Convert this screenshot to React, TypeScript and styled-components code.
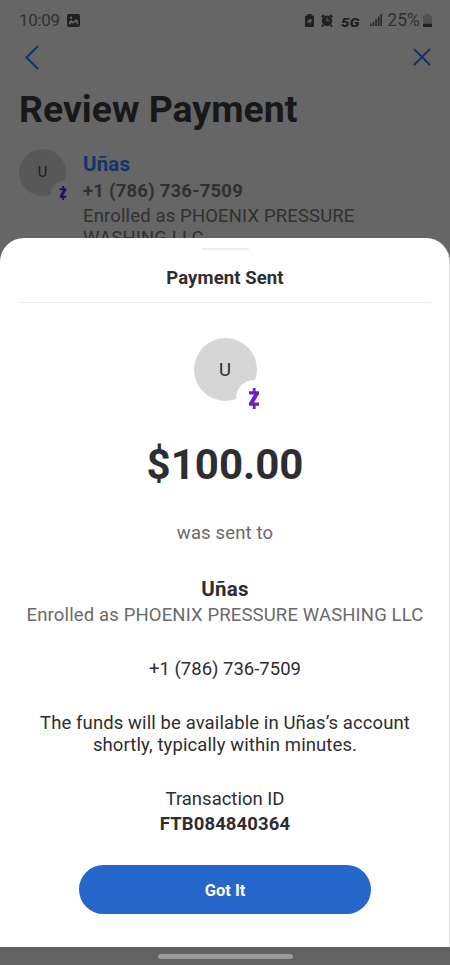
import React from 'react';
import styled, { createGlobalStyle } from 'styled-components';

const COLOR = {
    DIMMED: '#666666',
    DIMMED_TEXT: '#303030',
    DIMMED_BLUE: '#143468',
    WHITE: '#ffffff',
    TEXT: '#2e2e30',
    SUB_TEXT: '#6a6a6c',
    BUTTON: '#2466ca',
    ZELLE: '#6a1fc4',
    ZELLE_DIMMED: '#2c0b5e',
};

const ZelleMark = ({ color, width }: { color: string; width: number }): JSX.Element => (
    <svg width={width} height={width * 1.75} viewBox="0 0 12 21" fill="none" stroke={color}>
        <path d="M1 4.8h10M1 16.200h10" strokeWidth="3.2" />
        <path d="M9.200 4.900L2.800 16.100" strokeWidth="4" />
        <path d="M6.200 0v4M6.200 17v4" strokeWidth="2.800" />
    </svg>
);

const StatusBar = (): JSX.Element => (
    <StatusRow>
        <StatusText size={17} spacing={-0.3}>
            10:09
        </StatusText>
        <PhotoIcon width="13" height="13" viewBox="0 0 13 13">
            <rect width="13" height="13" rx="2" fill="#202020" />
            <path d="M2 10.500V8l2.200-2 2 1.800L9 4.700l2.200 2.500v3.300z" fill={COLOR.DIMMED} />
            <path d="M2.300 10.800l2.200-2.100 1.800 1.100 2.400-2 2.200 3z" fill="#202020" />
            <circle cx="4" cy="3.7" r="1.2" fill={COLOR.DIMMED} />
        </PhotoIcon>
        <StatusIcons>
            <svg width="9" height="13" viewBox="0 0 9 13">
                <path d="M2.500 0h4v1.500H8q1 0 1 1V12q0 1-1 1H1q-1 0-1-1V2.500q0-1 1-1h1.500z" fill="#202020" />
                <path d="M2.500 9.500q-1-3 1.400-3.800Q5 5.200 6.600 5q.4 4-2 4.200-1 .1-1.300-.4" fill={COLOR.DIMMED} />
                <path d="M2.500 9.300l2.600-2.400" stroke="#202020" strokeWidth=".7" />
            </svg>
            <AlarmIcon width="12" height="13" viewBox="0 0 12 13">
                <circle cx="6" cy="6.7" r="5.2" fill="#202020" />
                <path d="M.6 3.100L3.200.9M11.400 3.100L8.800.9M2.300 11l-1.300 1.600M9.700 11l1.300 1.600" stroke="#202020" strokeWidth="2" />
                <path d="M6 3.500v3.400h2.400" fill="none" stroke={COLOR.DIMMED} />
            </AlarmIcon>
            <Network>5G</Network>
            <SignalIcon width="12" height="12" viewBox="0 0 12 12" stroke="#292929" strokeWidth="1.600">
                <path d="M.9 12V9.500M3.500 12V7.500M6.100 12V5M8.700 12V2.500M11.200 12V0" />
            </SignalIcon>
            <StatusText size={17.5} spacing={0.1}>
                25%
            </StatusText>
            <BatteryIcon width="9" height="13" viewBox="0 0 9 13">
                <path d="M2.500 0h4v1.500H8q1 0 1 1V12q0 1-1 1H1q-1 0-1-1V2.500q0-1 1-1h1.500z" fill="#505050" />
                <path d="M0 9.800h9V12q0 1-1 1H1q-1 0-1-1z" fill="#202020" />
            </BatteryIcon>
        </StatusIcons>
    </StatusRow>
);

const App = (): JSX.Element => {
    return (
        <Screen>
            <GlobalStyle />
            <ReviewPage>
                <StatusBar />
                <NavRow>
                    <svg width="14" height="25" viewBox="0 0 14 25" fill="none" stroke={COLOR.DIMMED_BLUE} strokeWidth="2">
                        <path d="M12.500 1.500L1.500 12.500l11 11" strokeLinecap="round" />
                    </svg>
                    <svg width="18" height="18" viewBox="0 0 18 18" stroke={COLOR.DIMMED_BLUE} strokeWidth="2">
                        <path d="M1.500 1.500l15 15M16.500 1.500l-15 15" strokeLinecap="round" />
                    </svg>
                </NavRow>
                <PageTitle>Review Payment</PageTitle>
                <Recipient>
                    <Avatar size={47} color="#585858">
                        <AvatarLetter size={14.5} color="#1c1c1c">
                            U
                        </AvatarLetter>
                        <AvatarBadge size={24} offset={-9} cover={COLOR.DIMMED}>
                            <ZelleMark color={COLOR.ZELLE_DIMMED} width={8} />
                        </AvatarBadge>
                    </Avatar>
                    <RecipientInfo>
                        <RecipientName>Uñas</RecipientName>
                        <RecipientPhone>+1 (786) 736-7509</RecipientPhone>
                        <RecipientNote>Enrolled as PHOENIX PRESSURE WASHING LLC</RecipientNote>
                    </RecipientInfo>
                </Recipient>
            </ReviewPage>
            <Sheet>
                <Handle />
                <Text top={17} spacing={0.1} weight={700}>
                    Payment Sent
                </Text>
                <Divider />
                <Avatar size={63} color="#d6d6d6">
                    <AvatarLetter size={18.5} color={COLOR.TEXT}>
                        U
                    </AvatarLetter>
                    <AvatarBadge size={36} offset={-15} cover={COLOR.WHITE}>
                        <ZelleMark color={COLOR.ZELLE} width={12} />
                    </AvatarBadge>
                </Avatar>
                <Amount>$100.00</Amount>
                <Text top={32} spacing={0.14} color={COLOR.SUB_TEXT}>
                    was sent to
                </Text>
                <Text top={34} size={20.5} spacing={0.2} weight={700}>
                    Uñas
                </Text>
                <Text top={4} spacing={0.14} color={COLOR.SUB_TEXT}>
                    Enrolled as PHOENIX PRESSURE WASHING LLC
                </Text>
                <Text top={32}>+1 (786) 736-7509</Text>
                <Text top={32} spacing={0.1}>
                    The funds will be available in Uñas’s account
                    <br />
                    shortly, typically within minutes.
                </Text>
                <Text top={32}>Transaction ID</Text>
                <Text top={3} spacing={0.12} weight={700}>
                    FTB084840364
                </Text>
                <ConfirmButton>Got It</ConfirmButton>
            </Sheet>
            <GestureBar>
                <GesturePill />
            </GestureBar>
        </Screen>
    );
};

export default App;

const GlobalStyle = createGlobalStyle`
    * {
        box-sizing: border-box;
    }

    body {
        margin: 0;
        font-family: Roboto, sans-serif;
        background-color: ${COLOR.DIMMED};
    }
`;

const Screen = styled.div`
    display: flex;
    flex-direction: column;
    width: 450px;
    height: 965px;
    overflow: hidden;
    background-color: ${COLOR.DIMMED};
`;

const ReviewPage = styled.div`
    flex: none;
    height: 238px;
`;

const StatusRow = styled.div`
    display: flex;
    align-items: center;
    height: 40px;
    padding: 0 18px 0 19px;
`;

const StatusText = styled.span<{ size: number; spacing: number }>`
    font-size: ${({ size }) => size}px;
    letter-spacing: ${({ spacing }) => spacing}px;
    color: ${COLOR.DIMMED_TEXT};
`;

const PhotoIcon = styled.svg`
    margin-left: 7px;
`;

const StatusIcons = styled.div`
    display: flex;
    align-items: center;
    margin-left: auto;
`;

const AlarmIcon = styled.svg`
    margin-left: 7px;
`;

const Network = styled.span`
    width: 20px;
    margin: 5px 0 0 8px;
    font-size: 13px;
    font-weight: 900;
    font-style: italic;
    line-height: 14px;
    color: #202020;
    transform: scaleX(1.15);
    transform-origin: left;
`;

const SignalIcon = styled.svg`
    margin: 0 5px 0 9px;
`;

const BatteryIcon = styled.svg`
    margin-left: 3px;
`;

const NavRow = styled.div`
    display: flex;
    align-items: center;
    justify-content: space-between;
    height: 34px;
    padding: 0 19px 0 25px;
`;

const PageTitle = styled.h1`
    height: 75px;
    margin: 0;
    padding: 13px 0 0 19px;
    font-size: 37.4px;
    font-weight: 700;
    line-height: 44px;
    color: #181818;
`;

const Recipient = styled.div`
    display: flex;
    padding-left: 19px;
`;

const RecipientInfo = styled.div`
    width: 300px;
    margin: 4px 0 0 17px;
    font-size: 18.5px;
    line-height: 22px;
    letter-spacing: 0.14px;
    color: ${COLOR.DIMMED_TEXT};
`;

const RecipientName = styled.div`
    font-size: 20.5px;
    font-weight: 700;
    color: ${COLOR.DIMMED_BLUE};
`;

const RecipientPhone = styled.div`
    margin-top: 5px;
    font-weight: 700;
    letter-spacing: 0.22px;
`;

const RecipientNote = styled.div`
    margin-top: 3px;
`;

const Avatar = styled.div<{ size: number; color: string }>`
    position: relative;
    display: flex;
    flex: none;
    align-items: center;
    justify-content: center;
    width: ${({ size }) => size}px;
    height: ${({ size }) => size}px;
    border-radius: 50%;
    background-color: ${({ color }) => color};
`;

const AvatarLetter = styled.span<{ size: number; color: string }>`
    font-size: ${({ size }) => size}px;
    color: ${({ color }) => color};
`;

const AvatarBadge = styled.div<{ size: number; offset: number; cover: string }>`
    position: absolute;
    right: ${({ offset }) => offset}px;
    bottom: ${({ offset }) => offset}px;
    display: flex;
    align-items: center;
    justify-content: center;
    width: ${({ size }) => size}px;
    height: ${({ size }) => size}px;
    border-radius: 50%;
    background-color: ${({ cover }) => cover};
`;

const Sheet = styled.div`
    position: relative;
    display: flex;
    flex: none;
    flex-direction: column;
    align-items: center;
    height: 709px;
    padding: 10px 0 0 1px;
    border-right: 1px solid #dddddd;
    border-radius: 24px 24px 0 0;
    background-color: ${COLOR.WHITE};
`;

const Handle = styled.div`
    width: 47px;
    height: 2px;
    border-radius: 2px;
    background-color: #ececec;
`;

const Divider = styled.div`
    flex: none;
    width: 411px;
    height: 1px;
    margin: 13px 0 35px;
    background-color: #eeeeee;
`;

const Text = styled.div<{ top: number; size?: number; spacing?: number; weight?: number; color?: string }>`
    margin-top: ${({ top }) => top}px;
    font-size: ${({ size = 18.5 }) => size}px;
    font-weight: ${({ weight = 400 }) => weight};
    line-height: 22px;
    letter-spacing: ${({ spacing = 0 }) => spacing}px;
    text-align: center;
    white-space: nowrap;
    color: ${({ color = COLOR.TEXT }) => color};
`;

const Amount = styled.div`
    margin-top: 39px;
    font-size: 42px;
    font-weight: 700;
    line-height: 50px;
    color: ${COLOR.TEXT};
`;

const ConfirmButton = styled.button`
    width: 292px;
    height: 49px;
    margin-top: 30px;
    padding-top: 2px;
    border: none;
    border-radius: 25px;
    background-color: ${COLOR.BUTTON};
    color: ${COLOR.WHITE};
    font-family: inherit;
    font-size: 16.5px;
    font-weight: 700;
`;

const GestureBar = styled.div`
    display: flex;
    justify-content: center;
    height: 18px;
    padding-top: 7px;
    background-color: #626262;
`;

const GesturePill = styled.div`
    width: 135px;
    height: 5px;
    border-radius: 3px;
    background-color: #999999;
`;
